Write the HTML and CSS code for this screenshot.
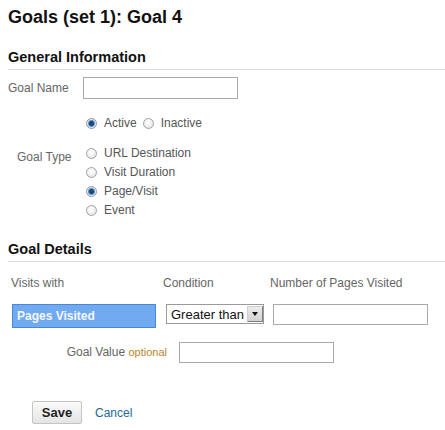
FILE: index.html
```html
<!DOCTYPE html>
<html lang="en">
<head>
    <meta charset="UTF-8">
    <meta name="viewport" content="width=device-width, initial-scale=1.0">
    <title>Goals (set 1): Goal 4</title>
    <link rel="stylesheet" href="styles.css">
</head>
<body>
    <h1 class="page-title">Goals (set 1): Goal 4</h1>

    <h2 class="section-title">General Information</h2>

    <div class="field-row name-row">
        <label class="field-label" for="goal-name">Goal Name</label>
        <input type="text" id="goal-name" class="text-input name-input">
    </div>

    <div class="status-row">
        <label class="option"><input type="radio" name="status" checked>Active</label>
        <label class="option"><input type="radio" name="status">Inactive</label>
    </div>

    <div class="field-row type-row">
        <span class="field-label type-label">Goal Type</span>
        <div class="radio-list">
            <label class="option"><input type="radio" name="type">URL Destination</label>
            <label class="option"><input type="radio" name="type">Visit Duration</label>
            <label class="option"><input type="radio" name="type" checked>Page/Visit</label>
            <label class="option"><input type="radio" name="type">Event</label>
        </div>
    </div>

    <h2 class="section-title details-title">Goal Details</h2>

    <div class="details-grid">
        <div class="col-head">Visits with</div>
        <div class="col-head">Condition</div>
        <div class="col-head">Number of Pages Visited</div>

        <div class="metric">Pages Visited</div>
        <div class="select">
            <span>Greater than</span>
            <span class="select-btn"><span class="select-arrow"></span></span>
        </div>
        <input type="text" class="text-input number-input">
    </div>

    <div class="value-row">
        <label class="value-label" for="goal-value">Goal Value <span class="optional">optional</span></label>
        <input type="text" id="goal-value" class="text-input value-input">
    </div>

    <div class="actions">
        <button type="submit" class="save-btn">Save</button>
        <a href="#" class="cancel-link">Cancel</a>
    </div>
</body>
</html>
```

FILE: styles.css
```css
body {
    margin: 0;
    padding: 0 0 0 8px;
    font-family: "Liberation Sans", Arial, sans-serif;
    color: #222;
    background: #fff;
}
.page-title {
    margin: 6px 0 0;
    font-size: 18px;
    line-height: 22px;
    font-weight: bold;
    color: #111;
}
.section-title {
    margin: 20px 0 0;
    padding-bottom: 3px;
    font-size: 14.5px;
    line-height: 18px;
    font-weight: bold;
    color: #111;
    border-bottom: 1px solid #dcdcdc;
}
.details-title {
    margin-top: 20px;
}
.field-row {
    display: flex;
    align-items: center;
}
.field-label {
    width: 75px;
    flex: none;
    font-size: 12px;
    line-height: 15px;
    color: #666;
}
.name-row {
    margin-top: 7px;
}
.text-input {
    box-sizing: border-box;
    height: 22px;
    margin: 0;
    padding: 0 4px;
    border: 1px solid #aaa;
    border-radius: 0;
    background: #fff;
    font-family: "Liberation Sans", Arial, sans-serif;
    font-size: 12px;
}
.name-input {
    width: 155px;
}
.option {
    display: flex;
    align-items: center;
    font-size: 12px;
    line-height: 15px;
    color: #555;
}
.option input {
    appearance: none;
    -webkit-appearance: none;
    box-sizing: border-box;
    width: 11px;
    height: 11px;
    margin: 0 7px 0 0;
    border: 1px solid #a3a3a3;
    border-radius: 50%;
    background: radial-gradient(circle at 45% 40%, #fff 0, #f4f4f4 40%, #d8d8d8 100%);
}
.option input:checked {
    border-color: #8b9bab;
    background: radial-gradient(circle, #1b4a7a 0, #1b4a7a 2px, #5f8fbf 3px, #dfe7ef 4px, #f3f3f3 100%);
}
.status-row {
    display: flex;
    gap: 6px;
    margin: 17px 0 0 78px;
}
.type-row {
    align-items: flex-start;
    margin-top: 13px;
}
.type-label {
    width: 78px;
    box-sizing: border-box;
    padding: 6px 0 0 9px;
}
.radio-list {
    display: flex;
    flex-direction: column;
}
.radio-list .option {
    height: 19px;
}
.details-grid {
    display: grid;
    grid-template-columns: 152px 107px 158px;
    row-gap: 13px;
    align-items: start;
    margin: 14px 0 0 3px;
}
.col-head {
    font-size: 12px;
    line-height: 15px;
    color: #666;
}
.metric {
    box-sizing: border-box;
    width: 144px;
    height: 24px;
    margin-left: 1px;
    padding-left: 4px;
    background: #72aaf2;
    border: 1px solid #4a87d5;
    color: #f4f8ff;
    font-size: 12px;
    font-weight: bold;
    line-height: 22px;
}
.select {
    box-sizing: border-box;
    display: flex;
    align-items: center;
    justify-content: space-between;
    width: 98px;
    height: 20px;
    margin-left: 3px;
    padding-left: 4px;
    border: 1px solid #9a9a9a;
    font-size: 13px;
    color: #111;
}
.select-btn {
    box-sizing: border-box;
    display: flex;
    align-items: center;
    justify-content: center;
    width: 16px;
    height: 16px;
    border: 1px solid;
    border-color: #cfcfcf #7d7d7d #7d7d7d #cfcfcf;
    background: linear-gradient(#ececec, #d2d2d2);
}
.select-arrow {
    width: 0;
    height: 0;
    border-left: 3.5px solid transparent;
    border-right: 3.5px solid transparent;
    border-top: 4px solid #111;
}
.number-input {
    width: 155px;
    height: 21px;
    margin-left: 3px;
}
.value-row {
    display: flex;
    align-items: center;
    margin-top: 14px;
}
.value-label {
    width: 159px;
    flex: none;
    text-align: right;
    font-size: 12px;
    line-height: 15px;
    color: #666;
}
.optional {
    font-size: 11px;
    color: #b3882b;
}
.value-input {
    width: 155px;
    height: 21px;
    margin-left: 12px;
}
.actions {
    display: flex;
    align-items: center;
    gap: 13px;
    margin: 38px 0 0 24px;
}
.save-btn {
    width: 50px;
    height: 23px;
    padding: 0;
    border: 1px solid #c4c4c4;
    border-radius: 2px;
    background: linear-gradient(#fbfbfb, #e4e4e4);
    font-family: "Liberation Sans", Arial, sans-serif;
    font-size: 13px;
    font-weight: bold;
    color: #222;
}
.cancel-link {
    font-size: 12px;
    color: #23698f;
    text-decoration: none;
}
```
